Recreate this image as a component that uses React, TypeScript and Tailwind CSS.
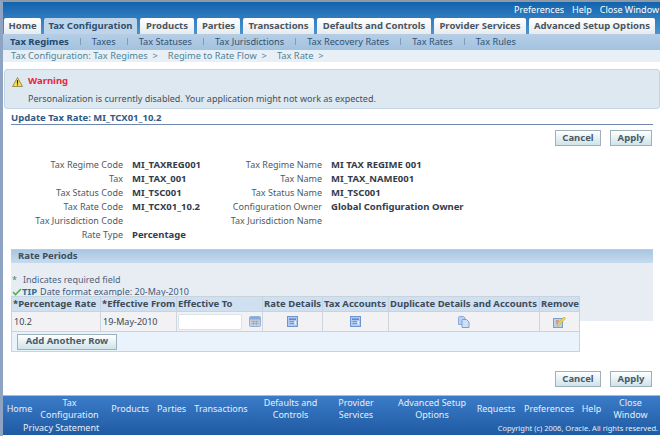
const font = "font-['Noto_Sans','Liberation_Sans',sans-serif]";

const tabs = [
  { label: "Home", w: "w-[37px]" },
  { label: "Tax Configuration", w: "w-[93px]", active: true },
  { label: "Products", w: "w-[54px]" },
  { label: "Parties", w: "w-[43px]" },
  { label: "Transactions", w: "w-[71px]" },
  { label: "Defaults and Controls", w: "w-[114px]" },
  { label: "Provider Services", w: "w-[92px]" },
  { label: "Advanced Setup Options", w: "w-[126px]" },
];

const subTabs = ["Taxes", "Tax Statuses", "Tax Jurisdictions", "Tax Recovery Rates", "Tax Rates", "Tax Rules"];

const left = [
  ["Tax Regime Code", "MI_TAXREG001"],
  ["Tax", "MI_TAX_001"],
  ["Tax Status Code", "MI_TSC001"],
  ["Tax Rate Code", "MI_TCX01_10.2"],
  ["Tax Jurisdiction Code", ""],
  ["Rate Type", "Percentage"],
];

const right = [
  ["Tax Regime Name", "MI TAX REGIME 001"],
  ["Tax Name", "MI_TAX_NAME001"],
  ["Tax Status Name", "MI_TSC001"],
  ["Configuration Owner", "Global Configuration Owner"],
  ["Tax Jurisdiction Name", ""],
];

const footerLinks = [
  { label: "Home", w: "w-[33px]" },
  { label: "Tax\nConfiguration", w: "w-[67px]" },
  { label: "Products", w: "w-[54px]" },
  { label: "Parties", w: "w-[29px]" },
  { label: "Transactions", w: "w-[70px]" },
  { label: "Defaults and\nControls", w: "w-[69px]" },
  { label: "Provider\nServices", w: "w-[62px]" },
  { label: "Advanced Setup\nOptions", w: "w-[90px]" },
  { label: "Requests", w: "w-[38px]" },
  { label: "Preferences", w: "w-[68px]" },
  { label: "Help", w: "w-[17px]" },
  { label: "Close\nWindow", w: "w-[61px]" },
];

function ActionButtons() {
  return (
    <div className="flex justify-end gap-[9px] pr-[8px]">
      <ActionButton label="Cancel" w="w-[46px]" />
      <ActionButton label="Apply" w="w-[42px]" />
    </div>
  );
}

function ActionButton({ label, w }: { label: string; w: string }) {
  return (
    <div className={`${w} h-[16px] flex items-center justify-center border border-[#9fb0bd] bg-gradient-to-b from-[#ffffff] to-[#cfe3ea] text-[9.5px] font-bold text-[#4a5a68]`}>
      {label}
    </div>
  );
}

function DetailColumn({ rows, labelW }: { rows: string[][]; labelW: string }) {
  return (
    <div className="flex flex-col">
      {rows.map(([k, v]) => (
        <div key={k} className="flex h-[14px] items-center">
          <div className={`${labelW} text-right text-[9px] text-[#4d5a66]`}>{k}</div>
          <div className="ml-[9px] text-[9.5px] font-bold text-[#333c4a] whitespace-nowrap">{v}</div>
        </div>
      ))}
    </div>
  );
}

function CalendarIcon() {
  return (
    <svg width="12" height="11" viewBox="0 0 12 11">
      <rect x="0.5" y="0.5" width="11" height="10" rx="1" fill="#c3ced9" stroke="#93b2da" />
      <rect x="1" y="1" width="10" height="2.5" fill="#86aadb" />
      <path d="M2.5 5.5h7M2.5 7.5h7M4.5 4.5v4.5M7.5 4.5v4.5" stroke="#98a5b3" strokeWidth="0.7" />
    </svg>
  );
}

function DetailsIcon() {
  return (
    <svg width="11" height="11" viewBox="0 0 11 11">
      <rect x="0.5" y="0.5" width="10" height="10" fill="#b3cbee" stroke="#6f95d0" />
      <rect x="2" y="2.5" width="7" height="1.3" fill="#4f7cc0" />
      <path d="M2.5 5.5h4.5M2.5 7.5h4.5" stroke="#5b86c6" strokeWidth="0.8" />
      <rect x="7.5" y="5" width="1.5" height="3.5" fill="#e8f0fb" />
    </svg>
  );
}

function DuplicateIcon() {
  return (
    <svg width="12" height="12" viewBox="0 0 12 12">
      <path d="M0.5 1.5a1 1 0 0 1 1-1h4l1.5 1.5v6.5h-6.5z" fill="#b9d0f0" stroke="#8aaad8" />
      <path d="M4 4.5a1 1 0 0 1 1-1h3.5l2.5 2.5v5.5h-7z" fill="#cfe0f6" stroke="#7ba0d6" />
    </svg>
  );
}

function EditIcon() {
  return (
    <svg width="13" height="12" viewBox="0 0 13 12">
      <rect x="0.5" y="2.5" width="9" height="9" fill="#bcd0ec" stroke="#7d9dcf" />
      <path d="M3 5h3M3 7h2" stroke="#e05a3a" strokeWidth="0.9" />
      <path d="M4.5 8L11 1l1.6 1.4L6 9.4 4 10z" fill="#f2d83f" stroke="#bfa022" strokeWidth="0.5" />
    </svg>
  );
}

function WarningIcon() {
  return (
    <svg width="11" height="10" viewBox="0 0 12 11">
      <path d="M6 0.6L11.5 10.5H0.5z" fill="#f7e04b" stroke="#7a7340" strokeWidth="0.8" strokeLinejoin="round" />
      <rect x="5.4" y="3.4" width="1.2" height="4" fill="#222" />
      <rect x="5.4" y="8.1" width="1.2" height="1.2" fill="#222" />
    </svg>
  );
}

export default function App() {
  const th = "h-[14px] flex items-center text-[9.5px] font-bold text-[#3f4b5a] whitespace-nowrap border-r border-[#c7d3df] last:border-r-0";
  const td = "h-[19px] flex items-center border-r border-[#cfd6de] last:border-r-0 text-[9px] text-[#3c4654]";

  return (
    <div className={`${font} w-[660px] h-[436px] overflow-hidden bg-white flex flex-col border-l-[3px] border-t-2 border-l-[#8fa3c2] border-t-[#8f9aa6]`}>
      {/* global links and tab strip */}
      <div className="h-[32px] shrink-0 bg-gradient-to-b from-[#0f63ad] to-[#4b94cf] flex flex-col">
        <div className="h-[16px] flex justify-end items-center gap-[8px] text-[9px] text-white pr-[1px]">
          <span>Preferences</span>
          <span>Help</span>
          <span>Close Window</span>
        </div>
        <div className="h-[16px] flex items-end gap-[3px] pl-[1px]">
          {tabs.map((t) => (
            <div
              key={t.label}
              className={`${t.w} h-[16px] shrink-0 flex items-center justify-center rounded-t-[2px] text-[9.5px] font-bold whitespace-nowrap ${
                t.active ? "bg-[#bdd4ea] text-[#2f4f6e]" : "bg-gradient-to-b from-[#ffffff] to-[#e6ebef] text-[#4a5560]"
              }`}
            >
              {t.label}
            </div>
          ))}
        </div>
      </div>

      {/* sub tabs */}
      <div className="h-[16px] shrink-0 bg-gradient-to-b from-[#b5cee6] to-[#a3c2df] flex items-center pl-[7px] text-[9.2px] text-[#2f5273]">
        <span className="font-bold text-[9.5px] text-[#234a6e]">Tax Regimes</span>
        {subTabs.map((s) => (
          <span key={s} className="flex items-center">
            <span className="mx-[11px] h-[7px] w-px bg-[#7f9cb8]" />
            {s}
          </span>
        ))}
      </div>

      {/* breadcrumbs */}
      <div className="h-[12px] shrink-0 bg-[#e9eff6] flex items-center gap-[10px] pl-[8px] text-[9.3px] text-[#4f8496]">
        <span>Tax Configuration: Tax Regimes &nbsp;&gt;</span>
        <span>Regime to Rate Flow &nbsp;&gt;</span>
        <span>Tax Rate &nbsp;&gt;</span>
      </div>

      {/* warning */}
      <div className="mt-[7px] ml-[1px] h-[40px] shrink-0 rounded-[3px] border border-[#c4d6e6] bg-[#dde8f1] pl-[7px] pt-[4px]">
        <div className="flex items-center gap-[5px] h-[15px]">
          <WarningIcon />
          <span className="text-[9.5px] font-bold text-[#e8263c]">Warning</span>
        </div>
        <div className="mt-[3px] pl-[16px] text-[9px] text-[#44505c]">
          Personalization is currently disabled. Your application might not work as expected.
        </div>
      </div>

      {/* title */}
      <div className="mt-[4px] ml-[8px] mr-[7px] h-[12px] flex items-center border-b border-[#6f86ad] text-[9.5px] font-bold text-[#2f5a86]">
        Update Tax Rate: MI_TCX01_10.2
      </div>

      <div className="mt-[5px]">
        <ActionButtons />
      </div>

      {/* read only details */}
      <div className="mt-[12px] flex shrink-0">
        <DetailColumn rows={left} labelW="w-[120px]" />
        <DetailColumn rows={right} labelW="w-[121px]" />
      </div>

      {/* rate periods */}
      <div className="mt-[7px] ml-[8px] mr-[7px] h-[72px] shrink-0 bg-[#e8edf3] flex flex-col">
        <div className="h-[14px] shrink-0 border-t border-[#b6cde2] bg-gradient-to-b from-[#a9c6e2] to-[#c6dbee] flex items-center pl-[7px] text-[9.5px] font-bold text-[#3d4e60]">
          Rate Periods
        </div>
        <div className="mt-[11px] h-[12px] flex items-center gap-[6px] pl-[1px] text-[9px] leading-[10px] text-[#4e6480]">
          <span className="text-[#3e8a6b]">*</span>
          <span>Indicates required field</span>
        </div>
        <div className="h-[11px] flex items-center pl-[1px] text-[9px] leading-[10px] text-[#3e5a7c]">
          <svg width="10" height="8" viewBox="0 0 10 8">
            <path d="M1 4l2.5 2.5L9 1" fill="none" stroke="#4fb04f" strokeWidth="1.6" />
          </svg>
          <span className="font-bold text-[9.5px] text-[#2f6f95] mr-[3px]">TIP</span>
          <span>Date format example: 20-May-2010</span>
        </div>
      </div>

      {/* table sits over the panel's bottom edge */}
      <div className="-mt-[25px] ml-[8px] w-[569px] relative shrink-0 border border-[#c9d3de]">
        <div className="grid grid-cols-[89px_76px_86px_60px_66px_151px_39px] bg-[#cfe0f0]">
          {["*Percentage Rate", "*Effective From", "Effective To", "Rate Details", "Tax Accounts", "Duplicate Details and Accounts", "Remove"].map((h) => (
            <div key={h} className={`${th} px-[1px]`}>{h}</div>
          ))}
        </div>
        <div className="grid grid-cols-[89px_76px_86px_60px_66px_151px_39px] bg-[#f2f2f4] border-t border-[#c9d3de]">
          <div className={`${td} pl-[2px]`}>10.2</div>
          <div className={`${td} pl-[2px]`}>19-May-2010</div>
          <div className={`${td} pl-[1px] gap-[7px]`}>
            <div className="h-[16px] w-[64px] bg-white border border-[#dbe3ea] rounded-[2px]" />
            <CalendarIcon />
          </div>
          <div className={`${td} justify-center`}><DetailsIcon /></div>
          <div className={`${td} justify-center`}><DetailsIcon /></div>
          <div className={`${td} justify-center`}><DuplicateIcon /></div>
          <div className={`${td} justify-center`}><EditIcon /></div>
        </div>
        <div className="h-[20px] bg-[#eaf3fc] border-t border-[#c9d3de] flex items-center pl-[5px]">
          <div className="h-[16px] w-[100px] flex items-center justify-center border border-[#9fb0bd] bg-gradient-to-b from-[#ffffff] to-[#cfe3ea] text-[9.5px] font-bold text-[#4a5a68]">
            Add Another Row
          </div>
        </div>
      </div>

      <div className="mt-[19px]">
        <ActionButtons />
      </div>

      {/* footer */}
      <div className="mt-[8px] mb-[1px] flex-1 border-t border-[#9dbde0] bg-gradient-to-b from-[#3b7bc8] to-[#1f5ba3] text-[9px] text-[#e6eef8] flex flex-col">
        <div className="h-[25px] shrink-0 flex items-center leading-[12px] text-center">
          {footerLinks.map((l) => (
            <div key={l.label} className={`${l.w} shrink-0 flex justify-center whitespace-pre`}>{l.label}</div>
          ))}
        </div>
        <div className="mt-[1px] flex items-center justify-between pl-[20px] pr-[2px] leading-[12px]">
          <span>Privacy Statement</span>
          <span className="text-[7.5px]">Copyright (c) 2006, Oracle. All rights reserved.</span>
        </div>
      </div>
    </div>
  );
}
